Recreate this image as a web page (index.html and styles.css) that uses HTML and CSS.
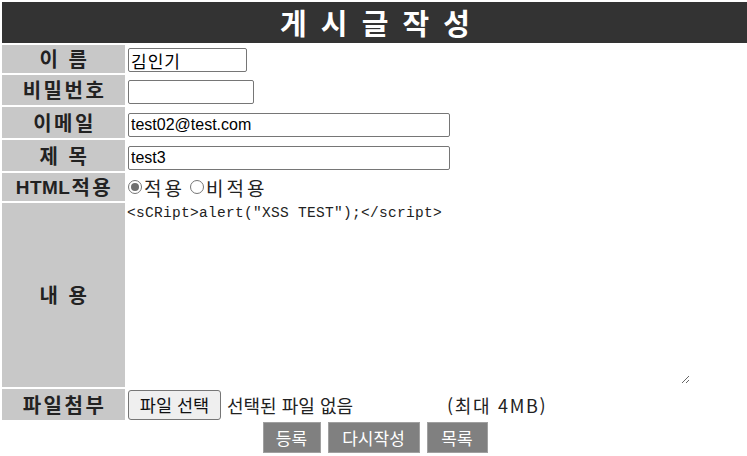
FILE: index.html
```html
<!DOCTYPE html>
<html lang="ko">
<head>
<meta charset="utf-8">
<title>게시글 작성</title>
<link rel="stylesheet" href="styles.css">
</head>
<body>
<form class="write-form">
  <div class="board">
    <div class="title">게 시 글 작 성</div>

    <div class="label">이 름</div>
    <div class="field end"><input class="inp inp-name" type="text" value="김인기"></div>

    <div class="label">비밀번호</div>
    <div class="field end"><input class="inp inp-pass" type="password"></div>

    <div class="label">이메일</div>
    <div class="field end"><input class="inp inp-wide" type="text" value="test02@test.com"></div>

    <div class="label">제 목</div>
    <div class="field end"><input class="inp inp-wide" type="text" value="test3"></div>

    <div class="label"><span class="latin">HTML</span>적용</div>
    <div class="field radios">
      <label class="radio"><span class="dot on"></span>적용</label>
      <label class="radio"><span class="dot"></span>비적용</label>
    </div>

    <div class="label">내 용</div>
    <div class="field area-cell"><textarea class="content" spellcheck="false"><sCRipt>alert("XSS TEST");</script></textarea></div>

    <div class="label">파일첨부</div>
    <div class="field file-cell">
      <span class="file-btn">파일 선택</span><span class="file-none">선택된 파일 없음</span><span class="file-max">(최대 4MB)</span>
    </div>

    <div class="btns">
      <span class="btn b1">등록</span><span class="btn b2">다시작성</span><span class="btn b3">목록</span>
    </div>
  </div>
</form>
</body>
</html>
```
FILE: styles.css
```css
html, body {
  margin: 0;
  padding: 0;
  overflow: hidden;
  background: #fff;
  font-family: "Noto Sans CJK KR", "Liberation Sans", sans-serif;
}
.write-form { margin: 0; }
.board {
  box-sizing: border-box;
  width: 750px;
  padding: 2px;
  display: grid;
  grid-template-columns: 123px 1fr;
  grid-template-rows: 41px 28px 30px 31px 31px 28px 184px 31px 34px;
  gap: 2px;
}
.title {
  grid-column: 1 / span 2;
  background: #333333;
  color: #fff;
  font-size: 29px;
  font-weight: bold;
  letter-spacing: 3px;
  padding-left: 3px;
  display: flex;
  align-items: center;
  justify-content: center;
  line-height: 1;
}
.label {
  background: #c8c8c8;
  color: #222;
  font-size: 20px;
  font-weight: bold;
  letter-spacing: 2.5px;
  padding-left: 2px;
  display: flex;
  align-items: center;
  justify-content: center;
  line-height: 1;
}
.latin {
  font-family: "Liberation Sans", sans-serif;
  font-size: 19px;
  letter-spacing: 0.5px;
  margin-right: 1px;
}
.field {
  display: flex;
  align-items: center;
  padding-left: 1px;
}
.field.end {
  align-items: flex-end;
  padding-bottom: 1px;
}
.inp {
  box-sizing: border-box;
  height: 24px;
  border: 1px solid #767676;
  border-radius: 2px;
  padding: 0 2px;
  margin: 0;
  font-family: "Liberation Sans", "Noto Sans CJK KR", sans-serif;
  font-size: 16px;
  color: #000;
  display: block;
  caret-color: transparent;
  outline: none;
}
.inp-name {
  width: 119px;
  font-family: "Noto Sans CJK KR", sans-serif;
  font-size: 17px;
  letter-spacing: 1px;
}
.inp-pass { width: 126px; }
.inp-wide { width: 322px; }
.radios {
  font-size: 19px;
  color: #222;
  letter-spacing: 3px;
}
.radio {
  display: inline-flex;
  align-items: center;
  line-height: 1;
  margin-right: 5px;
}
.dot {
  width: 14px;
  height: 14px;
  border: 1px solid #767676;
  border-radius: 50%;
  margin: 0 2px 0 0;
  box-sizing: border-box;
  position: relative;
  background: #fff;
}
.dot.on::after {
  content: "";
  position: absolute;
  left: 2px;
  top: 2px;
  width: 8px;
  height: 8px;
  border-radius: 50%;
  background: #6f6f6f;
}
.area-cell {
  align-items: flex-start;
  padding-left: 0;
}
.content {
  display: block;
  box-sizing: border-box;
  width: 563px;
  height: 181px;
  border: none;
  padding: 2px 0 0 0;
  margin: 0;
  font-family: "Liberation Mono", "DejaVu Sans Mono", monospace;
  font-size: 14.5px;
  letter-spacing: 0.3px;
  color: #222;
  background: #fff;
  resize: both;
  outline: none;
  caret-color: transparent;
}
.file-cell {
  font-size: 18px;
  color: #222;
  white-space: nowrap;
  line-height: 1;
}
.file-btn {
  box-sizing: border-box;
  width: 93px;
  height: 30px;
  display: flex;
  align-items: center;
  justify-content: center;
  border: 1px solid #767676;
  border-radius: 3px;
  background: #efefef;
  color: #111;
  font-size: 17.5px;
}
.file-none { margin-left: 6px; }
.file-max { margin-left: 94px; letter-spacing: 1.7px; }
.btns {
  grid-column: 1 / span 2;
  display: flex;
  justify-content: center;
  align-items: flex-start;
  gap: 7px;
  padding-left: 0;
}
.btn {
  box-sizing: border-box;
  height: 31px;
  display: flex;
  align-items: center;
  justify-content: center;
  background: #808080;
  border: 1px solid #a0a0a0;
  color: #fff;
  font-size: 17px;
  line-height: 1;
}
.b1 { width: 58px; }
.b2 { width: 92px; }
.b3 { width: 61px; }
```
